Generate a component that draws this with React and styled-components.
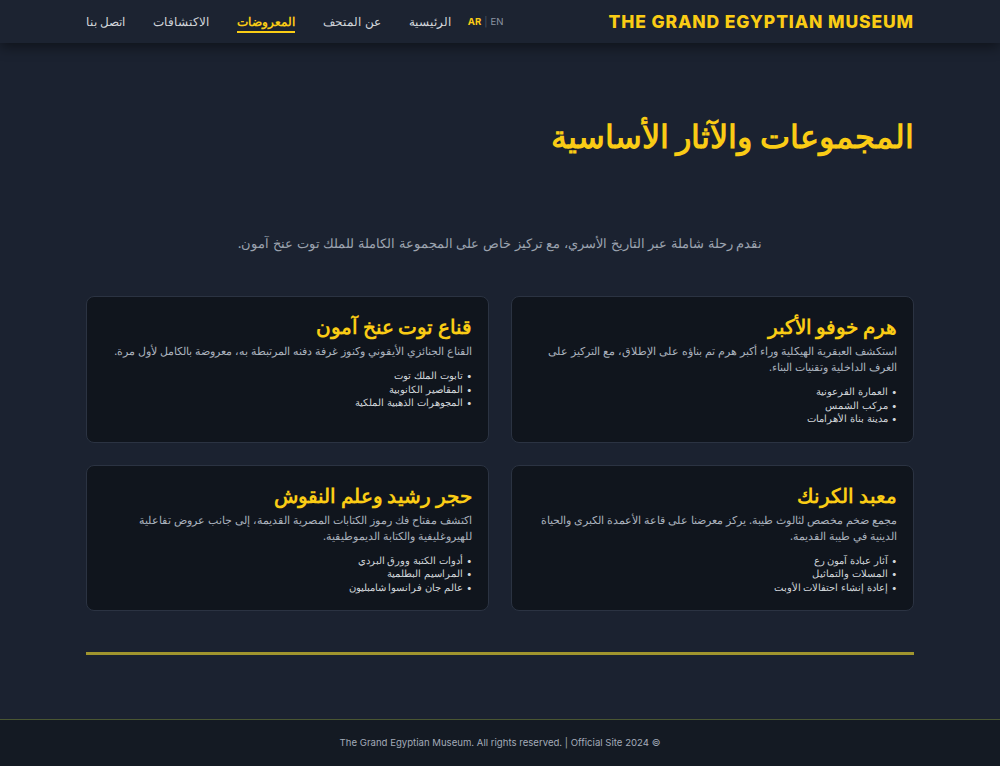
import React from 'react';
import styled, { createGlobalStyle } from 'styled-components';

const GlobalStyle = createGlobalStyle`
    * { box-sizing: border-box; }
    html, body { margin: 0; padding: 0; }
    body {
        background: #1b2230;
        font-family: Inter, sans-serif;
        color: #d1d5db;
    }
`;

const Page = styled.div`
    direction: rtl;
    min-height: 100vh;
    display: flex;
    flex-direction: column;
`;

const Header = styled.header`
    background: #1c2331;
    box-shadow: 0 4px 12px rgba(0, 0, 0, 0.45);
    height: 43px;
    position: relative;
    z-index: 2;
`;

const Bar = styled.div`
    width: 828px;
    margin: 0 auto;
    height: 100%;
    display: flex;
    align-items: center;
    justify-content: space-between;
`;

const Logo = styled.div`
    font-weight: 800;
    font-size: 17.5px;
    letter-spacing: 0.05em;
    color: #facc15;
    direction: ltr;
`;

const Nav = styled.nav`
    display: flex;
    align-items: center;
`;

const Lang = styled.div`
    direction: ltr;
    display: flex;
    align-items: center;
    gap: 3px;
    font-size: 9.6px;
    margin-left: 17px;
`;

const LangItem = styled.span`
    color: ${p => (p.$active ? '#facc15' : '#8b93a1')};
    font-weight: ${p => (p.$active ? 700 : 400)};
`;

const Sep = styled.span`
    color: #4b5563;
`;

const Links = styled.ul`
    list-style: none;
    margin: 0;
    padding: 0;
    display: flex;
    gap: 28px;
`;

const LinkItem = styled.li`
    font-size: 12px;
    color: ${p => (p.$active ? '#facc15' : '#d1d5db')};
    font-weight: ${p => (p.$active ? 600 : 400)};
    border-bottom: 2px solid ${p => (p.$active ? '#facc15' : 'transparent')};
    padding: 3px 0 2px;
`;

const Main = styled.main`
    flex: 1;
    width: 828px;
    margin: 0 auto;
    padding-top: 75px;
    padding-bottom: 64px;
`;

const Title = styled.h1`
    margin: 0;
    font-size: 32px;
    line-height: 38px;
    font-weight: 700;
    color: #facc15;
`;

const Lead = styled.p`
    margin: 77px 0 0;
    text-align: center;
    font-size: 13px;
    line-height: 21px;
    color: #9ca3af;
`;

const Grid = styled.div`
    margin-top: 42px;
    display: grid;
    grid-template-columns: 1fr 1fr;
    gap: 22px;
`;

const Card = styled.article`
    background: #10151d;
    border: 1px solid #2b3342;
    border-radius: 8px;
    padding: 16px 16px 16px;
`;

const CardTitle = styled.h2`
    margin: 0 0 2px;
    font-size: 19.5px;
    line-height: 29px;
    font-weight: 700;
    color: #facc15;
`;

const CardText = styled.p`
    margin: 0;
    font-size: 10.6px;
    line-height: 16px;
    color: #aab2be;
`;

const Points = styled.ul`
    margin: 9px 0 0;
    padding: 0;
    list-style: none;
`;

const Point = styled.li`
    font-size: 9.8px;
    line-height: 13.5px;
    color: #d1d5db;

    &::before {
        content: '•';
        display: inline-block;
        width: 5px;
        margin-left: 4px;
        text-align: center;
    }
`;

const Rule = styled.hr`
    margin: 41px 0 0;
    border: 0;
    height: 3px;
    background: #a0952e;
`;

const Footer = styled.footer`
    background: #141a23;
    border-top: 1px solid #4a5632;
    padding: 16px 0;
    text-align: center;
`;

const Copy = styled.p`
    margin: 0;
    direction: ltr;
    font-size: 9.6px;
    line-height: 14px;
    color: #a3abb8;
`;

const links = ['الرئيسية', 'عن المتحف', 'المعروضات', 'الاكتشافات', 'اتصل بنا'];

const cards = [
    {
        title: 'هرم خوفو الأكبر',
        text: 'استكشف العبقرية الهيكلية وراء أكبر هرم تم بناؤه على الإطلاق، مع التركيز على الغرف الداخلية وتقنيات البناء.',
        points: ['العمارة الفرعونية', 'مركب الشمس', 'مدينة بناة الأهرامات'],
    },
    {
        title: 'قناع توت عنخ آمون',
        text: 'القناع الجنائزي الأيقوني وكنوز غرفة دفنه المرتبطة به، معروضة بالكامل لأول مرة.',
        points: ['تابوت الملك توت', 'المقاصير الكانوبية', 'المجوهرات الذهبية الملكية'],
    },
    {
        title: 'معبد الكرنك',
        text: 'مجمع ضخم مخصص لثالوث طيبة. يركز معرضنا على قاعة الأعمدة الكبرى والحياة الدينية في طيبة القديمة.',
        points: ['آثار عبادة آمون رع', 'المسلات والتماثيل', 'إعادة إنشاء احتفالات الأوبت'],
    },
    {
        title: 'حجر رشيد وعلم النقوش',
        text: 'اكتشف مفتاح فك رموز الكتابات المصرية القديمة، إلى جانب عروض تفاعلية للهيروغليفية والكتابة الديموطيقية.',
        points: ['أدوات الكتبة وورق البردي', 'المراسيم البطلمية', 'عالم جان فرانسوا شامبليون'],
    },
];

function App() {
    return (
        <Page>
            <GlobalStyle />
            <Header>
                <Bar>
                    <Logo>THE GRAND EGYPTIAN MUSEUM</Logo>
                    <Nav>
                        <Lang>
                            <LangItem $active>AR</LangItem>
                            <Sep>|</Sep>
                            <LangItem>EN</LangItem>
                        </Lang>
                        <Links>
                            {links.map(l => (
                                <LinkItem key={l} $active={l === 'المعروضات'}>{l}</LinkItem>
                            ))}
                        </Links>
                    </Nav>
                </Bar>
            </Header>
            <Main>
                <Title>المجموعات والآثار الأساسية</Title>
                <Lead>نقدم رحلة شاملة عبر التاريخ الأسري، مع تركيز خاص على المجموعة الكاملة للملك توت عنخ آمون.</Lead>
                <Grid>
                    {cards.map(c => (
                        <Card key={c.title}>
                            <CardTitle>{c.title}</CardTitle>
                            <CardText>{c.text}</CardText>
                            <Points>
                                {c.points.map(p => <Point key={p}>{p}</Point>)}
                            </Points>
                        </Card>
                    ))}
                </Grid>
                <Rule />
            </Main>
            <Footer>
                <Copy>The Grand Egyptian Museum. All rights reserved. | Official Site 2024 ©</Copy>
            </Footer>
        </Page>
    );
}

export default App;
